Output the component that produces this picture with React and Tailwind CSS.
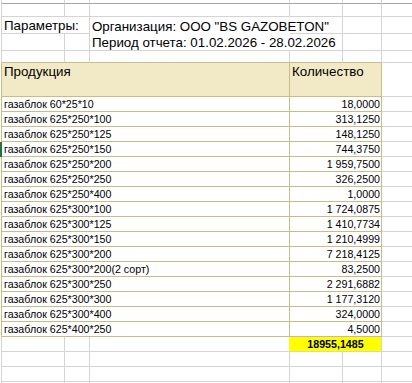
import React from "react";

const GRID = "grid grid-cols-[2px_63px_25px_200px_53px_39px_60px]";
const FONT = "font-['Liberation_Sans',Arial,sans-serif] text-black";

const rows = [
  ["газаблок 60*25*10", "18,0000"],
  ["газаблок 625*250*100", "313,1250"],
  ["газаблок 625*250*125", "148,1250"],
  ["газаблок 625*250*150", "744,3750"],
  ["газаблок 625*250*200", "1 959,7500"],
  ["газаблок 625*250*250", "326,2500"],
  ["газаблок 625*250*400", "1,0000"],
  ["газаблок 625*300*100", "1 724,0875"],
  ["газаблок 625*300*125", "1 410,7734"],
  ["газаблок 625*300*150", "1 210,4999"],
  ["газаблок 625*300*200", "7 218,4125"],
  ["газаблок 625*300*200(2 сорт)", "83,2500"],
  ["газаблок 625*300*250", "2 291,6882"],
  ["газаблок 625*300*300", "1 177,3120"],
  ["газаблок 625*300*400", "324,0000"],
  ["газаблок 625*400*250", "4,5000"],
];

function Edge({ tone = "gray" }) {
  if (tone === "green") return <div className="bg-[#217346]" />;
  return (
    <div
      className={
        "border-r " +
        (tone === "tan" ? "border-r-[#c9bc86]" : "border-r-[#d4d4d4]")
      }
    />
  );
}

function EmptyRow({ h, bottom = "border-b-[#d4d4d4]" }) {
  return (
    <div className={GRID + " " + h}>
      <Edge />
      <div className={"border-r border-b border-r-[#d4d4d4] " + bottom} />
      <div className={"border-r border-b border-r-[#d4d4d4] " + bottom} />
      <div className={"border-r border-b border-r-[#d4d4d4] " + bottom} />
      <div className={"border-r border-b border-r-[#d4d4d4] " + bottom} />
      <div className={"border-r border-b border-r-[#d4d4d4] " + bottom} />
      <div className={"border-r border-b border-r-[#d4d4d4] " + bottom} />
    </div>
  );
}

export default function App() {
  return (
    <div className={"w-[412px] h-[383px] overflow-hidden bg-white " + FONT}>
      {/* top partial row */}
      <EmptyRow h="h-[4px]" bottom="border-b-[#a6a6a6]" />
      <EmptyRow h="h-[13px]" />

      {/* Параметры / Организация */}
      <div className={GRID + " h-[17px] text-[13.33px] leading-[15px]"}>
        <Edge />
        <div className="col-span-2 border-r border-b border-[#d4d4d4] flex items-end pl-[2px] whitespace-nowrap">
          Параметры:
        </div>
        <div className="flex items-end pl-[2px] whitespace-nowrap overflow-visible">
          Организация: ООО "BS GAZOBETON"
        </div>
        <div className="border-r border-b border-[#d4d4d4]" />
        <div className="border-r border-b border-[#d4d4d4]" />
        <div className="border-r border-b border-[#d4d4d4]" />
      </div>

      {/* Период */}
      <div className={GRID + " h-[17px] text-[13.33px] leading-[15px]"}>
        <Edge />
        <div className="border-r border-b border-[#d4d4d4]" />
        <div className="border-r border-b border-[#d4d4d4]" />
        <div className="border-b border-[#d4d4d4] flex items-end pl-[2px] whitespace-nowrap overflow-visible">
          Период отчета: 01.02.2026 - 28.02.2026
        </div>
        <div className="border-r border-b border-[#d4d4d4]" />
        <div className="border-r border-b border-[#d4d4d4]" />
        <div className="border-r border-b border-[#d4d4d4]" />
      </div>

      {/* spacer row above header */}
      <div className={GRID + " h-[12px]"}>
        <Edge />
        <div className="border-r border-b border-r-[#d4d4d4] border-b-[#c9bc86]" />
        <div className="border-r border-b border-r-[#d4d4d4] border-b-[#c9bc86]" />
        <div className="border-r border-b border-r-[#d4d4d4] border-b-[#c9bc86]" />
        <div className="border-r border-b border-r-[#d4d4d4] border-b-[#c9bc86]" />
        <div className="border-r border-b border-r-[#d4d4d4] border-b-[#c9bc86]" />
        <div className="border-r border-b border-[#d4d4d4]" />
      </div>

      {/* header */}
      <div className={GRID + " h-[34px] text-[13.33px] leading-[15px]"}>
        <Edge tone="tan" />
        <div className="col-span-3 bg-[#f2eac6] border-r border-b border-[#c9bc86] pl-[2px] pt-px">
          Продукция
        </div>
        <div className="col-span-2 bg-[#f2eac6] border-r border-b border-[#c9bc86] pl-[2px] pt-px">
          Количество
        </div>
        <div className="border-r border-b border-[#d4d4d4]" />
      </div>

      {/* data */}
      {rows.map(([name, qty], i) => (
        <div key={i} className={GRID + " h-[15px] text-[10.67px] leading-[13px]"}>
          <Edge tone={i === 3 ? "green" : "tan"} />
          <div className="col-span-3 border-r border-b border-[#c9bc86] flex items-end pl-[2px] whitespace-nowrap">
            {name}
          </div>
          <div className="col-span-2 border-r border-b border-[#c9bc86] flex items-end justify-end pr-px whitespace-nowrap">
            {qty}
          </div>
          <div className="border-r border-b border-[#d4d4d4]" />
        </div>
      ))}

      {/* total */}
      <div className={GRID + " h-[15px] text-[10.67px] leading-[13px]"}>
        <Edge />
        <div className="border-r border-b border-[#d4d4d4]" />
        <div className="border-r border-b border-[#d4d4d4]" />
        <div className="border-r border-b border-r-[#ffff00] border-b-[#d4d4d4]" />
        <div className="col-span-2 bg-[#ffff00] border-r border-b border-[#d4d4d4] flex items-end justify-center font-bold whitespace-nowrap">
          18955,1485
        </div>
        <div className="border-r border-b border-[#d4d4d4]" />
      </div>

      <EmptyRow h="h-[15px]" />
      <EmptyRow h="h-[15px]" />
      <EmptyRow h="h-[15px]" />
    </div>
  );
}
